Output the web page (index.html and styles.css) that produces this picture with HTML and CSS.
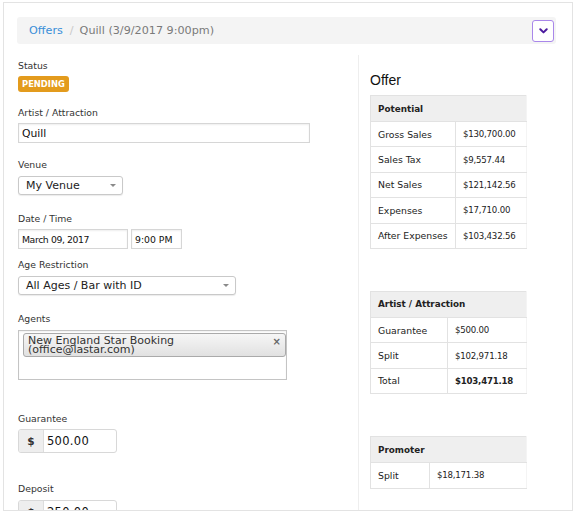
FILE: index.html
```html
<!DOCTYPE html>
<html lang="en">
<head>
<meta charset="utf-8">
<title>Offer – Quill</title>
<link rel="stylesheet" href="styles.css">
</head>
<body>
<div class="card">
  <div class="crumbs">
    <a class="crumb-link">Offers</a><span class="crumb-sep">/</span><span class="crumb-current">Quill (3/9/2017 9:00pm)</span>
    <button class="toggle" type="button" aria-label="More">
      <svg width="9" height="6" viewBox="0 0 9 6"><path d="M1.3 1.3 L4.5 4.4 L7.7 1.3" fill="none" stroke="#4b1a9e" stroke-width="2" stroke-linecap="round" stroke-linejoin="round"/></svg>
    </button>
  </div>

  <div class="columns">
    <div class="form-col">
      <div class="field field-status">
        <div class="label">Status</div>
        <span class="badge">PENDING</span>
      </div>

      <div class="field field-artist">
        <div class="label">Artist / Attraction</div>
        <div class="text-input artist-input">Quill</div>
      </div>

      <div class="field field-venue">
        <div class="label label-loose">Venue</div>
        <div class="select venue-select"><span>My Venue</span><span class="caret"></span></div>
      </div>

      <div class="field field-date">
        <div class="label">Date / Time</div>
        <div class="date-row">
          <div class="text-input date-input">March 09, 2017</div>
          <div class="text-input time-input">9:00 PM</div>
        </div>
      </div>

      <div class="field field-age">
        <div class="label label-loose">Age Restriction</div>
        <div class="select age-select"><span>All Ages / Bar with ID</span><span class="caret"></span></div>
      </div>

      <div class="field field-agents">
        <div class="label label-loose">Agents</div>
        <div class="agents-box">
          <div class="tag">
            <span class="tag-text">New England Star Booking<br>(office@lastar.com)</span>
            <span class="tag-close">×</span>
          </div>
        </div>
      </div>

      <div class="field field-guarantee">
        <div class="label">Guarantee</div>
        <div class="money"><span class="addon">$</span><span class="money-value">500.00</span></div>
      </div>

      <div class="field field-deposit">
        <div class="label label-loose">Deposit</div>
        <div class="money"><span class="addon">$</span><span class="money-value">250.00</span></div>
      </div>
    </div>

    <div class="summary-col">
      <h2 class="summary-title">Offer</h2>

      <table class="fin">
        <colgroup><col class="col-potential"><col></colgroup>
        <tr><th colspan="2">Potential</th></tr>
        <tr><td>Gross Sales</td><td class="amount">$130,700.00</td></tr>
        <tr><td>Sales Tax</td><td class="amount">$9,557.44</td></tr>
        <tr><td>Net Sales</td><td class="amount">$121,142.56</td></tr>
        <tr><td>Expenses</td><td class="amount">$17,710.00</td></tr>
        <tr><td>After Expenses</td><td class="amount">$103,432.56</td></tr>
      </table>

      <table class="fin fin-spaced">
        <colgroup><col class="col-artist"><col></colgroup>
        <tr><th colspan="2">Artist / Attraction</th></tr>
        <tr><td>Guarantee</td><td class="amount">$500.00</td></tr>
        <tr><td>Split</td><td class="amount">$102,971.18</td></tr>
        <tr><td>Total</td><td class="amount amount-total">$103,471.18</td></tr>
      </table>

      <table class="fin fin-spaced">
        <colgroup><col class="col-promoter"><col></colgroup>
        <tr><th colspan="2">Promoter</th></tr>
        <tr><td>Split</td><td class="amount">$18,171.38</td></tr>
      </table>
    </div>
  </div>
</div>
</body>
</html>
```

FILE: styles.css
```css
* { box-sizing: border-box; }

body {
  margin: 0;
  background: #fff;
  font-family: "DejaVu Sans", sans-serif;
  color: #333;
}

.card {
  margin: 2px 0 0 3px;
  width: 570px;
  height: 509px;
  border: 1px solid #e3e3e3;
  padding: 14px 16px 0 13px;
  overflow: hidden;
}

/* breadcrumb bar */
.crumbs {
  display: flex;
  align-items: center;
  height: 27px;
  background: #f4f4f4;
  border-radius: 3px;
  padding: 0 2px 0 12px;
  font-size: 11.2px;
}
.crumb-link { color: #3a8fd8; }
.crumb-sep { color: #c9c9c9; margin: 0 6px 0 7px; }
.crumb-current { color: #7a7a7a; }
.toggle {
  margin-left: auto;
  width: 22px;
  height: 22px;
  padding: 0;
  border: 1px solid #a987ea;
  border-radius: 3px;
  background: #fff;
  display: flex;
  align-items: center;
  justify-content: center;
}

/* two columns */
.columns {
  display: flex;
  margin-top: 11px;
}
.form-col {
  width: 341px;
  padding-left: 1px;
  padding-bottom: 40px;
}
.summary-col {
  flex: 1;
  border-left: 1px solid #eeeeee;
  padding: 17px 0 0 11px;
}

/* form fields */
.label {
  font-size: 9.3px;
  line-height: 12px;
  color: #333;
  margin-bottom: 4px;
}
.label-loose { margin-bottom: 5px; }

.field-status { margin-top: 5px; }
.field-artist { margin-top: 15px; }
.field-venue { margin-top: 16px; }
.field-date { margin-top: 18px; }
.field-age { margin-top: 10px; }
.field-agents { margin-top: 18px; }
.field-guarantee { margin-top: 33px; }
.field-deposit { margin-top: 30px; }

.badge {
  display: block;
  width: max-content;
  height: 16px;
  line-height: 16px;
  padding: 0 4px;
  border-radius: 3px;
  background: #e39b1d;
  color: #fff;
  font-weight: bold;
  font-size: 8.4px;
}

.text-input {
  display: flex;
  align-items: center;
  height: 20px;
  border: 1px solid #d6d6d6;
  box-shadow: inset 0 1px 2px rgba(0, 0, 0, 0.07);
  padding: 0 3px;
  font-size: 10.8px;
  color: #111;
  background: #fff;
}
.artist-input { width: 292px; }

.date-row { display: flex; gap: 3px; }
.date-input { width: 110px; font-size: 9.3px; letter-spacing: -0.4px; }
.time-input { width: 51px; font-size: 9.3px; }

.select {
  display: flex;
  align-items: center;
  justify-content: space-between;
  height: 19px;
  border: 1px solid #c9c9c9;
  border-radius: 3px;
  padding: 0 6px 0 7px;
  font-size: 11px;
  color: #222;
  background: #fff;
  box-shadow: 0 1px 1px rgba(0, 0, 0, 0.08);
}
.venue-select { width: 105px; }
.age-select { width: 218px; }
.caret {
  width: 0;
  height: 0;
  border-left: 3px solid transparent;
  border-right: 3px solid transparent;
  border-top: 3px solid #8a8a8a;
}

.agents-box {
  width: 269px;
  height: 50px;
  border: 1px solid #c4c4c4;
  box-shadow: inset 0 1px 2px rgba(0, 0, 0, 0.06);
  padding: 2px 0 0 4px;
  background: #fff;
}
.tag {
  display: flex;
  justify-content: space-between;
  width: 263px;
  height: 24px;
  border: 1px solid #aaaaaa;
  border-radius: 3px;
  background: linear-gradient(#f6f6f6, #e1e1e1);
  padding: 1.5px 4px 0 4px;
  font-size: 11px;
  line-height: 9px;
  color: #333;
}
.tag-close {
  color: #666;
  font-weight: bold;
  font-size: 10px;
  line-height: 9px;
  padding-top: 1px;
}

.money {
  display: flex;
  width: 99px;
  height: 24px;
  border: 1px solid #d8d8d8;
  border-radius: 3px;
  overflow: hidden;
  background: #fff;
}
.addon {
  width: 25px;
  display: flex;
  align-items: center;
  justify-content: center;
  background: #eeeeee;
  border-right: 1px solid #dddddd;
  font-weight: bold;
  font-size: 10.5px;
  color: #333;
}
.money-value {
  display: flex;
  align-items: center;
  padding-left: 3px;
  font-size: 11.5px;
  letter-spacing: 0.3px;
  color: #111;
}

/* summary tables */
.summary-title {
  margin: 0 0 7px;
  font: normal 14px/16px "Liberation Sans", Arial, sans-serif;
  color: #111;
}

.fin {
  width: 157px;
  border-collapse: collapse;
  table-layout: fixed;
  font-size: 9.3px;
  color: #222;
}
.fin-spaced { margin-top: 42px; }
.col-potential { width: 85px; }
.col-artist { width: 77px; }
.col-promoter { width: 59px; }

.fin th {
  height: 26px;
  padding: 0 7px;
  text-align: left;
  background: #efefef;
  font-size: 8.8px;
  font-weight: bold;
  color: #222;
  border: 1px solid #e2e2e2;
  border-right-color: #f4f4f4;
}
.fin td {
  height: 25.4px;
  padding: 0 7px;
  border: 1px solid #e2e2e2;
  white-space: nowrap;
}
.fin td.amount {
  font-size: 8.6px;
  letter-spacing: -0.2px;
  border-right-color: #f4f4f4;
}
.fin td.amount-total { font-weight: bold; }
```
